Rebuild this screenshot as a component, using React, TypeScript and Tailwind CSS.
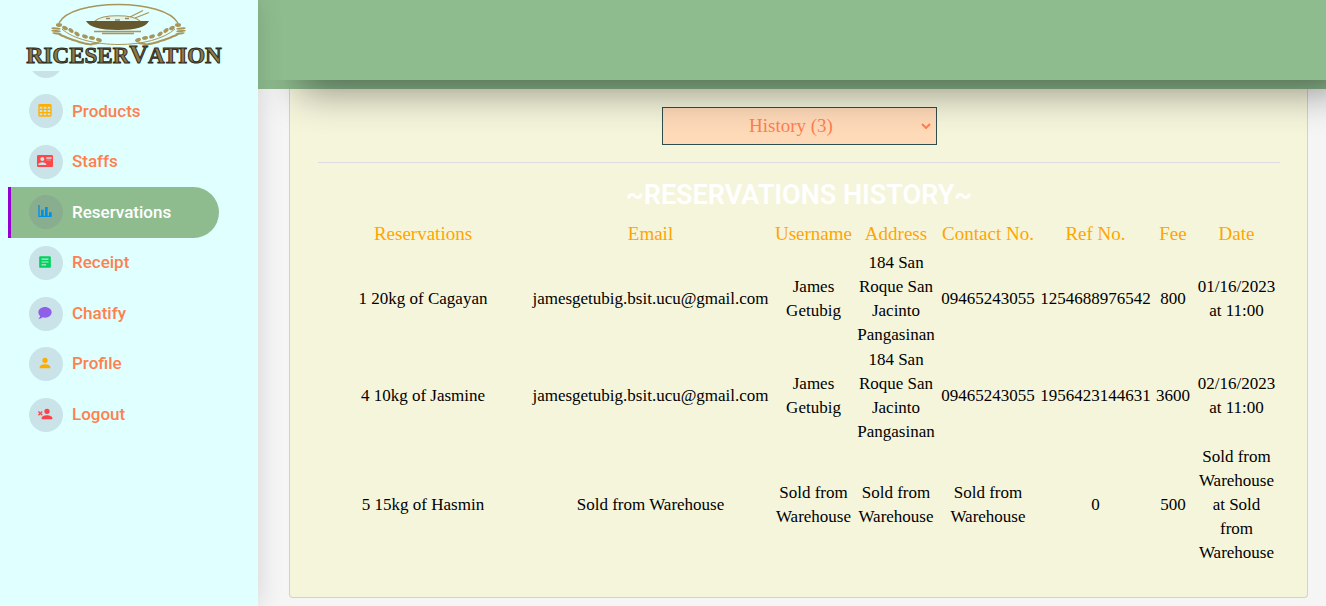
import React from 'react';

const nav = [
  { label: 'Products', color: 'text-[#ffaf00]', d: 'M4,3H20A2,2 0 0,1 22,5V20A2,2 0 0,1 20,22H4A2,2 0 0,1 2,20V5A2,2 0 0,1 4,3M4,7V10H8V7H4M10,7V10H14V7H10M20,10V7H16V10H20M4,12V15H8V12H4M4,20H8V17H4V20M10,12V15H14V12H10M10,20H14V17H10V20M20,20V17H16V20H20M20,12H16V15H20V12Z' },
  { label: 'Staffs', color: 'text-[#ff4747]', d: 'M2,3H22C23.05,3 24,3.95 24,5V19C24,20.05 23.05,21 22,21H2C0.95,21 0,20.05 0,19V5C0,3.95 0.95,3 2,3M14,6V7H22V6H14M14,8V9H21.5L22,9V8H14M14,10V11H21V10H14M8,13.91C6,13.91 2,15 2,17V18H14V17C14,15 10,13.91 8,13.91M8,6A3,3 0 0,0 5,9A3,3 0 0,0 8,12A3,3 0 0,0 11,9A3,3 0 0,0 8,6Z' },
  { label: 'Reservations', color: 'text-[#0090e7]', active: true, d: 'M22,21H2V3H4V19H6V10H10V19H12V6H16V19H18V14H22V21Z' },
  { label: 'Receipt', color: 'text-[#00d25b]', d: 'M4,2H20A2,2 0 0,1 22,4V20A2,2 0 0,1 20,22H4A2,2 0 0,1 2,20V4A2,2 0 0,1 4,2M6,6V8H18V6H6M6,11V13H18V11H6M6,16V18H14V16H6Z' },
  { label: 'Chatify', color: 'text-[#8f5fe8]', d: 'M12,3C17.5,3 22,6.58 22,11C22,15.42 17.5,19 12,19C10.76,19 9.57,18.82 8.47,18.5C5.55,21 2,21 2,21C4.33,18.67 4.7,17.1 4.75,16.5C3.05,15.07 2,13.13 2,11C2,6.58 6.5,3 12,3Z' },
  { label: 'Profile', color: 'text-[#ffab00]', d: 'M12,4A4,4 0 0,1 16,8A4,4 0 0,1 12,12A4,4 0 0,1 8,8A4,4 0 0,1 12,4M12,14C16.42,14 20,15.79 20,18V20H4V18C4,15.79 7.58,14 12,14Z' },
  { label: 'Logout', color: 'text-[#fc424a]', d: 'M15,14C12.33,14 7,15.33 7,18V20H23V18C23,15.33 17.67,14 15,14M15,12A4,4 0 0,0 19,8A4,4 0 0,0 15,4A4,4 0 0,0 11,8A4,4 0 0,0 15,12M5,9.59L2.88,7.46L1.46,8.88L3.59,11L1.46,13.12L2.88,14.54L5,12.41L7.12,14.54L8.54,13.12L6.41,11L8.54,8.88L7.12,7.46L5,9.59Z' },
];

const columns = [
  { label: 'Reservations', width: 'w-[210px]' },
  { label: 'Email', width: 'w-[245px]' },
  { label: 'Username', width: 'w-[81px]' },
  { label: 'Address', width: 'w-[84px]' },
  { label: 'Contact No.', width: 'w-[100px]' },
  { label: 'Ref No.', width: 'w-[115px]' },
  { label: 'Fee', width: 'w-[40px]' },
  { label: 'Date', width: 'w-[87px]' },
];

const rows = [
  ['1 20kg of Cagayan', 'jamesgetubig.bsit.ucu@gmail.com', 'James Getubig', '184 San Roque San Jacinto Pangasinan', '09465243055', '1254688976542', '800', '01/16/2023 at 11:00'],
  ['4 10kg of Jasmine', 'jamesgetubig.bsit.ucu@gmail.com', 'James Getubig', '184 San Roque San Jacinto Pangasinan', '09465243055', '1956423144631', '3600', '02/16/2023 at 11:00'],
  ['5 15kg of Hasmin', 'Sold from Warehouse', 'Sold from Warehouse', 'Sold from Warehouse', 'Sold from Warehouse', '0', '500', 'Sold from Warehouse at Sold from Warehouse'],
];

const leaves = [
  [59, 25, 0], [65, 28, 25], [71, 30.5, 35], [77, 34, 35], [85, 36.5, 20], [92, 38, 10], [99, 40, 20],
];
const blades = [
  [56, 28.5, 5], [56, 31, 5], [57, 33.5, 8], [63, 36, 20], [69, 38.5, 18], [75, 40.5, 16], [81, 42.5, 14], [88, 44, 10], [95, 43.5, -8],
];

function Wheat() {
  return (
    <g fill="#a8955a">
      {leaves.map(([x, y, r]) => (
        <ellipse key={`${x}-${y}`} cx={x} cy={y} rx="3" ry="1.9" transform={`rotate(${r} ${x} ${y})`} />
      ))}
      {blades.map(([x, y, r]) => (
        <ellipse key={`${x}-${y}`} cx={x} cy={y} rx="4.8" ry="1.1" transform={`rotate(${r} ${x} ${y})`} />
      ))}
    </g>
  );
}

function Logo() {
  return (
    <svg viewBox="0 0 258 71" className="block h-[71px] w-full" role="img" aria-label="Riceservation">
      <path d="M59 23C65 11 90 4.500 118 4.500S171 11 178 23" fill="none" stroke="#a8955a" strokeWidth="1.4" />
      <path d="M62 29C73 39 96 44.500 119 44.500S164 39 175 29" fill="none" stroke="#a8955a" strokeWidth="1" />
      <Wheat />
      <g transform="translate(237 0) scale(-1 1)"><Wheat /></g>
      <path d="M95 21C103 14 132 14 140 21" fill="#e0f6ea" stroke="#a8955a" strokeWidth="1.2" />
      <path d="M106 18.500h4M115 20h5M125 18.500h4" stroke="#8d8b75" strokeWidth="1.500" />
      <path d="M130 17L143 10.500M135 18L149 12.500" stroke="#a8955a" strokeWidth="1.300" />
      <path d="M86 21H149C146 27 136 30 118 30S89 27 86 21Z" fill="#65582f" />
      <path d="M94 31.500H141M102 33.500H134" stroke="#a8955a" strokeWidth="1.300" />
      <text x="124" y="63" textAnchor="middle" fill="#8f7a45" stroke="#2b2a24" strokeWidth="1" fontFamily="'Liberation Serif', serif" fontWeight="700" fontSize="23">
        <tspan fontSize="24">R</tspan>ICESER<tspan fontSize="26">V</tspan>ATION
      </text>
    </svg>
  );
}

export default function App() {
  return (
    <div className="flex h-screen overflow-hidden bg-[#f5f5f5] font-['Liberation_Serif',serif]">
      <aside className="relative z-20 w-[258px] shrink-0 bg-[#e0ffff] font-[Roboto,sans-serif] shadow-[0_0_24px_rgba(0,0,0,0.14)]">
        <Logo />
        <div className="h-[15px] overflow-hidden pl-[29px]">
          <div className="-mt-[27px] size-[34px] rounded-full bg-[#c9e2e8]" />
        </div>
        <nav>
          <ul className="grid h-[354px] auto-rows-fr">
            {nav.map((item) => (
              <li key={item.label} className="flex pl-2">
                <a
                  href={`#${item.label.toLowerCase()}`}
                  className={`flex w-[211px] items-center gap-[9px] border-l-[3px] pl-[18px] text-[17px] font-medium ${item.active ? 'rounded-r-full border-[#9400d3] bg-[#8fbc8f] text-white' : 'border-transparent text-[#ff7f50]'}`}
                >
                  <span className={`flex size-[34px] items-center justify-center rounded-full bg-[#6c7293]/20 pr-[2px] pb-[2px] ${item.color}`}>
                    <svg viewBox="0 0 24 24" className={item.label === 'Receipt' ? 'size-[14px]' : 'size-4'} fill="currentColor" fillRule="evenodd" aria-hidden="true"><path d={item.d} /></svg>
                  </span>
                  {item.label}
                </a>
              </li>
            ))}
          </ul>
        </nav>
      </aside>
      <div className="flex min-w-0 flex-1 flex-col">
        <header className="h-[89px] shrink-0 bg-[#8fbc8f]">
          <div className="relative z-10 h-20 shadow-[30px_20px_40px_-10px_rgba(0,0,0,0.45)]" />
        </header>
        <main className="min-h-0 flex-1 pr-[18px] pl-[31px]">
          <section className="rounded-b border border-t-0 border-[#d4d4bc] bg-[#f5f5dc] pt-[18px] pr-[27px] pb-8 pl-7">
            <div className="relative mx-auto w-[275px]">
              <select aria-label="Reservation list" className="h-[38px] w-full appearance-none border border-[#2f4f4f] bg-[#ffdab9] pr-4 text-center text-[19px] text-[#ff7f50]">
                <option>History (3)</option>
              </select>
              <svg viewBox="0 0 10 6" className="pointer-events-none absolute top-4 right-[6px] h-[6px] w-[10px]" fill="none" stroke="#ff7f50" strokeWidth="2" aria-hidden="true"><path d="M1 1L5 5L9 1" /></svg>
            </div>
            <hr className="mt-[17px] border-[#dcdce0]" />
            <h1 className="mt-4 text-center font-[Roboto,sans-serif] text-[27px] leading-8 font-semibold text-white">~RESERVATIONS HISTORY~</h1>
            <table className="mt-2 w-full table-fixed text-center text-black">
              <thead>
                <tr className="h-[31px] text-[19px] text-[#ffa500]">
                  {columns.map((c) => <th key={c.label} className={`p-0 font-normal ${c.width}`}>{c.label}</th>)}
                </tr>
              </thead>
              <tbody className="text-[17px] leading-6">
                {rows.map((row) => (
                  <tr key={row[0]}>
                    {row.map((cell, i) => <td key={columns[i].label} className="px-[2px] pt-px pb-0">{cell}</td>)}
                  </tr>
                ))}
              </tbody>
            </table>
          </section>
        </main>
      </div>
    </div>
  );
}
